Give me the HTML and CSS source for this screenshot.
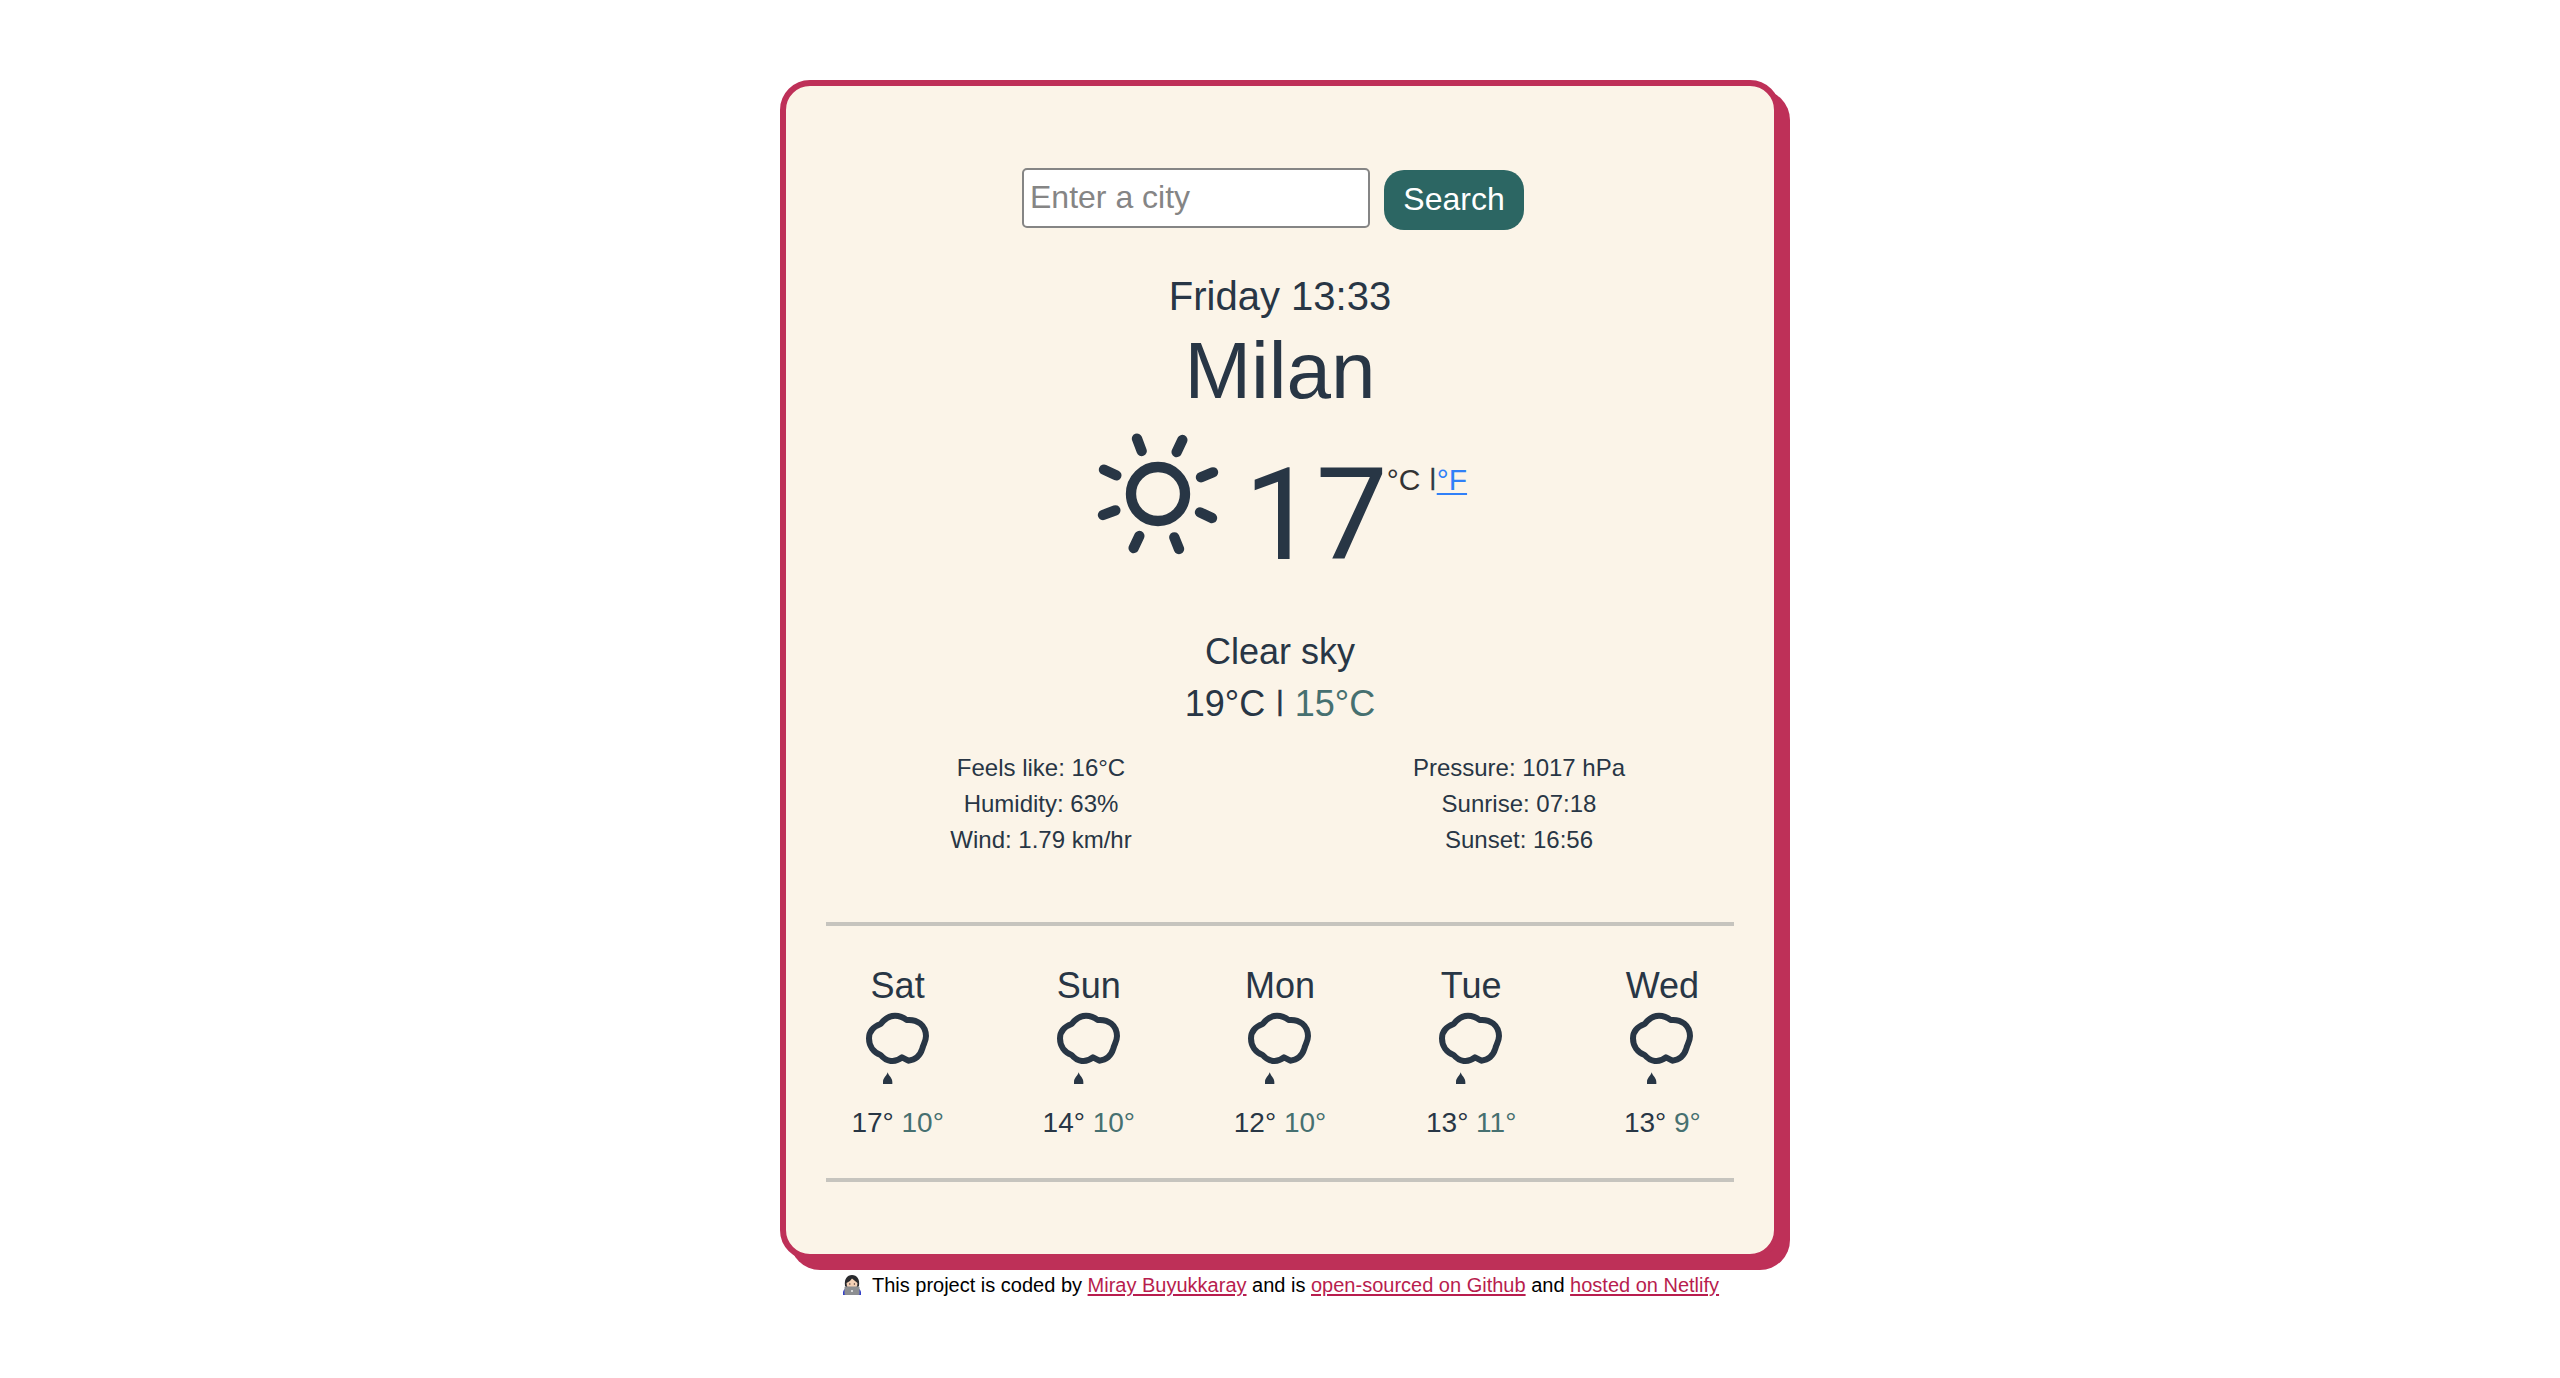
FILE: index.html
```html
<!DOCTYPE html>
<html lang="en">
<head>
<meta charset="utf-8">
<title>Weather</title>
<link rel="stylesheet" href="styles.css">
</head>
<body>
<svg class="defs" aria-hidden="true">
  <symbol id="shower" viewBox="159 300 210 222">
    <path d="M212 342C225 325 240 317 255 317C268 317 280 322 290 330C322 327 347 345 348 378C348 394 340 402 337 416C330 438 315 450 295 452L276 442C255 460 228 455 212 435C190 427 177 408 177 385C177 365 190 350 212 342Z" fill="none" stroke="currentColor" stroke-width="18" stroke-linejoin="round"/>
    <path d="M233 487C237 499 247 504 247 516V523H219V516C219 504 229 499 233 487Z" fill="currentColor"/>
  </symbol>
</svg>
<main class="card">
  <form class="search">
    <input class="search-input" type="text" placeholder="Enter a city">
    <button class="search-button" type="button">Search</button>
  </form>
  <div class="date">Friday 13:33</div>
  <h1 class="city">Milan</h1>
  <div class="current">
    <svg class="sun" viewBox="24 462 420 420">
      <circle cx="234" cy="672" r="81" fill="none" stroke="currentColor" stroke-width="31"/>
      <path d="M171 506L185 543M307 510L290 546M399 607L363 622M72 599L109 616M69 735L106 721M360 727L396 744M161 834L178 798M283 802L297 837" fill="none" stroke="currentColor" stroke-width="31" stroke-linecap="round"/>
    </svg>
    <span class="temp">17</span>
    <span class="units"><span class="active">°C</span> <span class="bar">|</span><a class="fahrenheit" href="#">°F</a></span>
  </div>
  <div class="summary">Clear sky</div>
  <div class="summary">19°C <span class="bar">|</span> <span class="low">15°C</span></div>
  <div class="details">
    <div><div>Feels like: 16°C</div><div>Humidity: 63%</div><div>Wind: 1.79 km/hr</div></div>
    <div><div>Pressure: 1017 hPa</div><div>Sunrise: 07:18</div><div>Sunset: 16:56</div></div>
  </div>
  <div class="forecast">
    <div class="day"><div class="name">Sat</div><svg class="icon"><use href="#shower"/></svg><div class="range">17° <span class="low">10°</span></div></div>
    <div class="day"><div class="name">Sun</div><svg class="icon"><use href="#shower"/></svg><div class="range">14° <span class="low">10°</span></div></div>
    <div class="day"><div class="name">Mon</div><svg class="icon"><use href="#shower"/></svg><div class="range">12° <span class="low">10°</span></div></div>
    <div class="day"><div class="name">Tue</div><svg class="icon"><use href="#shower"/></svg><div class="range">13° <span class="low">11°</span></div></div>
    <div class="day"><div class="name">Wed</div><svg class="icon"><use href="#shower"/></svg><div class="range">13° <span class="low">9°</span></div></div>
  </div>
</main>
<footer class="footer">
  <svg class="coder" viewBox="0 0 20 22">
    <path d="M1 21V18Q2 14 6 14H14Q18 14 19 18V21Z" fill="#3340c8"/>
    <path d="M3 12C2 5 5 1 10 1S18 5 17 12L15 14H5Z" fill="#292a2e"/>
    <path d="M4.5 9Q8 8 10 4.5Q13 7 15.5 9Q15.5 15 10 15T4.5 9Z" fill="#f3d0b5"/>
    <circle cx="7.8" cy="10" r=".7" fill="#433"/><circle cx="12.4" cy="10" r=".7" fill="#433"/>
    <rect x="2.5" y="12.5" width="15" height="8.5" rx="1" fill="#8c8e91"/>
    <circle cx="10" cy="17" r="1" fill="#eee"/>
  </svg>
  <span>This project is coded by <a href="#">Miray Buyukkaray</a> and is <a href="#">open-sourced on Github</a> and <a href="#">hosted on Netlify</a></span>
</footer>
</body>
</html>
```
FILE: styles.css
```css
* { box-sizing: border-box; }
body {
  margin: 0;
  padding-top: 80px;
  background: #fff;
  font-family: "Liberation Sans", Arial, sans-serif;
}
.defs { position: absolute; width: 0; height: 0; }
.card {
  width: 1000px;
  height: 1180px;
  margin: 0 auto;
  padding: 82px 40px 0;
  border: 6px solid #be3058;
  border-radius: 30px;
  box-shadow: 10px 10px #be3058;
  background: #fbf4e8;
  color: #283645;
  text-align: center;
}
.search {
  display: flex;
  justify-content: center;
  gap: 14px;
  height: 62px;
  margin: 0 14px 38px 0;
}
.search-input {
  width: 348px;
  height: 60px;
  padding: 0 5px 2px 6px;
  border: 2px solid #858585;
  border-radius: 5px;
  background: #fff;
  font: 32px "Liberation Sans", Arial, sans-serif;
}
.search-input::placeholder { color: #858585; opacity: 1; }
.search-button {
  width: 140px;
  height: 60px;
  margin-top: 2px;
  padding: 0 0 2px;
  border: 0;
  border-radius: 20px;
  background: #2c6663;
  color: #fff;
  font: 32px "Liberation Sans", Arial, sans-serif;
}
.date { font-size: 40px; line-height: 57px; }
.city { margin: 0; font-size: 80px; font-weight: 400; line-height: 92px; }
.current {
  display: flex;
  justify-content: center;
  height: 209px;
  padding-right: 5px;
}
.sun { width: 140px; height: 140px; margin: 7px 16px 0 0; }
.temp { margin: 34px -1px 0 0; font: 128px/128px Roboto, sans-serif; }
.units { margin-top: 45px; font-size: 30px; line-height: 36px; }
.active { color: #333; }
.bar {
  padding: 0 .04em;
  font-size: .78em;
  line-height: 0;
  vertical-align: .2em;
  -webkit-text-stroke: .6px currentColor;
}
.fahrenheit { color: #3080f8; text-underline-offset: 3px; text-decoration-thickness: 2px; }
.summary { font-size: 36px; line-height: 52px; }
.low { color: #467070; }
.details {
  display: grid;
  grid-template-columns: 1fr 1fr;
  margin: 20px -24px 64px;
  font-size: 24px;
  line-height: 36px;
}
.forecast {
  display: grid;
  grid-template-columns: repeat(5, 191.2px);
  justify-content: center;
  height: 260px;
  padding-top: 38px;
  border-top: 4px solid #c6c4be;
  border-bottom: 4px solid #c6c4be;
}
.name { font-size: 36px; line-height: 44px; }
.icon { display: block; width: 70px; height: 74px; margin: 2px auto 22px; }
.range { font-size: 28px; line-height: 34px; }
.footer {
  display: flex;
  justify-content: center;
  gap: 10px;
  padding: 13px 0 0 1px;
  font-size: 20px;
  line-height: 24px;
  color: #000;
}
.coder { width: 20px; height: 22px; margin-top: 1px; }
.footer a { color: #b81d4e; text-underline-offset: 2px; text-decoration-thickness: 2px; }
```
